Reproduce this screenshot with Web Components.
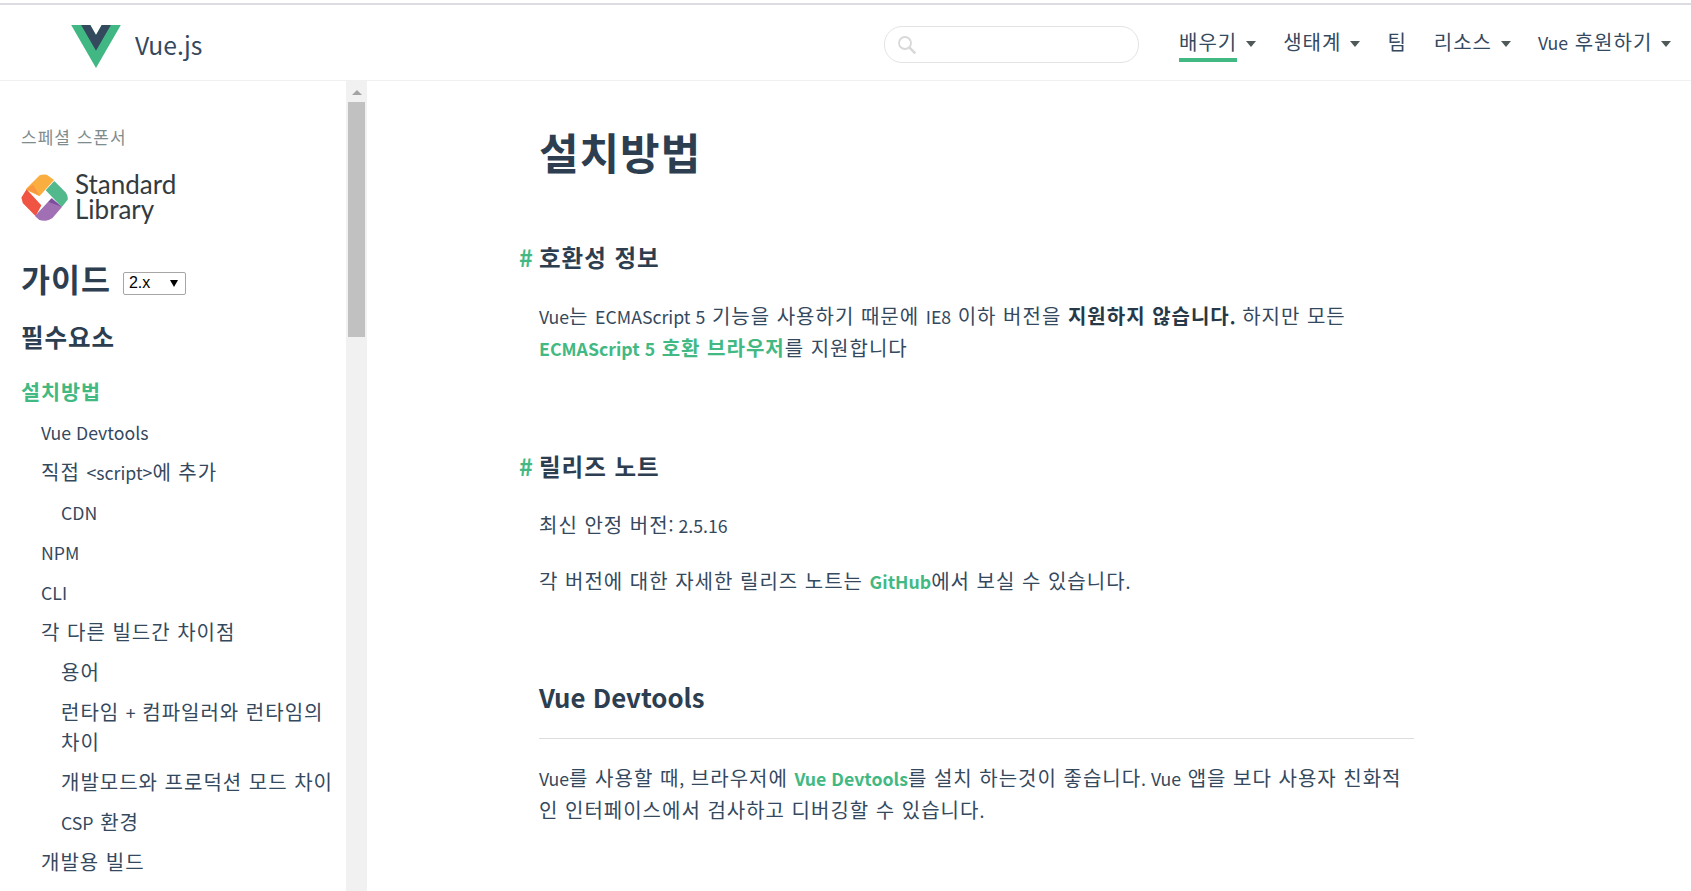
<!DOCTYPE html>
<html lang="ko">
<head>
<meta charset="utf-8">
<title>설치방법 - Vue.js</title>
<style>
  html, body { margin: 0; height: 100%; overflow: hidden; background: #fff; }
  body { font-family: "Noto Sans CJK KR", "Noto Sans", sans-serif; color: #34495e; font-size: 20px; letter-spacing: .05em; }
  .l { font-size: .885em; letter-spacing: 0; }
</style>
</head>
<body>
<docs-page>
  <top-bar slot="top">
    <nav-item active menu>배우기</nav-item>
    <nav-item menu>생태계</nav-item>
    <nav-item>팀</nav-item>
    <nav-item menu>리소스</nav-item>
    <nav-item menu><span class="l">Vue</span> 후원하기</nav-item>
  </top-bar>
  <side-bar slot="side"></side-bar>
  <doc-content slot="main"></doc-content>
</docs-page>

<script>
// latin runs sit smaller than the hangul around them
function latin(text) {
  const esc = (s) => s.replace(/&/g, '&amp;').replace(/</g, '&lt;').replace(/>/g, '&gt;');
  return text.split(/([A-Za-z0-9.,:<>+#][A-Za-z0-9.,:<>+# ]*[A-Za-z0-9.,:<>+#]|[A-Za-z0-9.,:<>+#])/)
    .map((part, i) => (i % 2 ? `<span class="l">${esc(part)}</span>` : esc(part)))
    .join('')
    .replace(/\n/g, '<br>');
}

class DocsPage extends HTMLElement {
  constructor() {
    super();
    this.attachShadow({ mode: 'open' }).innerHTML = `
      <style>
        :host { display: grid; grid-template-rows: 81px 1fr; grid-template-columns: 367px 1fr; height: 891px; overflow: hidden; }
        .top { grid-column: 1 / 3; padding-top: 3px; box-sizing: border-box; }
      </style>
      <div class="top"><slot name="top"></slot></div>
      <slot name="side"></slot>
      <slot name="main"></slot>`;
  }
}

class TopBar extends HTMLElement {
  constructor() {
    super();
    this.attachShadow({ mode: 'open' }).innerHTML = `
      <style>
        :host { display: flex; align-items: flex-start; height: 78px; box-sizing: border-box; border-top: 2px solid #dcdce2; border-bottom: 1px solid #f0f0f0; padding-left: 71px; background: #fff; overflow: hidden; }
        .mark { display: block; flex: none; width: 50px; height: 43px; margin-top: 20px; }
        .name { flex: none; width: 67px; font-size: 24.7px; line-height: 40px; margin: 19px 0 0 14px; color: #34495e; letter-spacing: 0; }
        .search { flex: none; margin: 21px 0 0 682px; width: 255px; height: 37px; box-sizing: border-box; border: 1px solid #e3e3e3; border-radius: 18px; display: flex; align-items: center; padding-left: 12px; }
        .search svg { width: 20px; height: 20px; }
        nav { display: flex; flex: none; margin-left: 40px; }
      </style>
      <svg class="mark" viewBox="0 0 261.76 226.69" aria-label="Vue logo">
        <path d="M161.096.001l-30.225 52.351L100.647.001H-.005l130.877 226.688L261.749.001z" fill="#41b883"/>
        <path d="M161.096.001l-30.225 52.351L100.647.001H52.346l78.526 136.01L209.398.001z" fill="#34495e"/>
      </svg>
      <div class="name">Vue.js</div>
      <div class="search">
        <svg viewBox="0 0 20 20" fill="none" stroke="#d8d8d8"><circle cx="8" cy="8" r="6" stroke-width="1.8"/><path d="M12.3 12.3l6 6" stroke-width="2.6"/></svg>
      </div>
      <nav><slot></slot></nav>`;
  }
}

class NavItem extends HTMLElement {
  connectedCallback() {
    if (this.shadowRoot) return;
    const active = this.hasAttribute('active');
    const menu = this.hasAttribute('menu');
    this.attachShadow({ mode: 'open' }).innerHTML = `
      <style>
        :host { display: flex; flex: none; align-items: flex-start; margin-right: 27px; font-size: 20px; color: #34495e; }
        :host(:last-child) { margin-right: 0; }
        .t { display: block; height: 30px; margin-top: 23px; line-height: 28px; white-space: nowrap; border-bottom: ${active ? '4px solid #42b983' : '0'}; }
        i { width: 0; height: 0; margin: 36px 0 0 9px; border: 5px solid transparent; border-top: 6px solid #4f5959; border-bottom: 0; }
      </style>
      <span class="t"><slot></slot></span>${menu ? '<i></i>' : ''}`;
  }
}

const LINKS = [
  ['Vue Devtools', 1],
  ['직접 <script>에 추가', 1],
  ['CDN', 2],
  ['NPM', 1],
  ['CLI', 1],
  ['각 다른 빌드간 차이점', 1],
  ['용어', 2],
  ['런타임 + 컴파일러와 런타임의\n차이', 2],
  ['개발모드와 프로덕션 모드 차이', 2],
  ['CSP 환경', 2],
  ['개발용 빌드', 1],
];

class SideBar extends HTMLElement {
  constructor() {
    super();
    this.attachShadow({ mode: 'open' }).innerHTML = `
      <style>
        :host { display: flex; height: 810px; overflow: hidden; background: #fff; }
        .in { width: 346px; box-sizing: border-box; padding: 41px 8px 0 21px; flex: none; }
        .l { font-size: .885em; letter-spacing: 0; }
        .sp { font-size: 17px; line-height: 30px; color: #7f8c8d; }
        .logo { display: flex; align-items: center; gap: 7px; margin-top: 20px; height: 50px; }
        .logo svg { flex: none; }
        .logo b { font: 400 26px/25px Lato, sans-serif; letter-spacing: 0; color: #333a40; }
        .g { display: flex; align-items: center; margin-top: 36px; height: 40px; }
        h2 { margin: 0; font-size: 31.5px; line-height: 40px; color: #2c3e50; font-weight: 700; }
        .ver { margin-left: 12px; margin-top: 10px; width: 63px; height: 23px; box-sizing: border-box; border: 1px solid #a6a6a6; border-radius: 2px; display: flex; align-items: center; justify-content: space-between; padding: 0 7px 0 5px; font: 16px "Liberation Sans", sans-serif; letter-spacing: 0; color: #000; }
        .ver i { border: 4px solid transparent; border-top: 7px solid #000; border-bottom: 0; }
        h3 { margin: 24px 0 0; font-size: 24.5px; line-height: 30px; color: #2c3e50; font-weight: 700; }
        .act { margin-top: 24px; font-size: 20.7px; line-height: 30px; font-weight: 700; color: #42b983; }
        #links { display: flex; flex-direction: column; gap: 10px; padding-top: 11px; }
        .sb { width: 21px; flex: none; background: #f1f1f1; display: flex; flex-direction: column; align-items: center; }
        .sb .up { margin-top: 9px; border: 5px solid transparent; border-bottom: 5px solid #a3a3a3; border-top: 0; }
        .sb .th { margin-top: 7px; width: 17px; height: 235px; background: #c1c1c1; }
      </style>
      <div class="in">
        <div class="sp">스페셜 스폰서</div>
        <div class="logo">
          <svg width="47" height="47" viewBox="0 0 47 47" stroke-linejoin="round" stroke-width="1.5">
            <path d="M5.7 15.3 L19 2 Q22 .6 25.7 1.5 L32 6 L18.3 21.3 Z" fill="#fbae40" stroke="#fbae40"/>
            <path d="M5.7 15.3 L18.3 21.3 L12 10.5 Z" fill="#f9963f"/>
            <path d="M1.2 23.7 L5.7 16.5 L19.5 31.5 L14.5 41 L2.5 28.7 Z" fill="#f05442" stroke="#f05442"/>
            <path d="M25.7 16.3 L33.3 8 L44 18.7 Q46.5 22 46 25.3 L40.7 32 Z" fill="#52b98d" stroke="#52b98d"/>
            <path d="M15 42 L30.7 25 L40 33 L30.7 43.7 Q27 46.3 24 46 Q20 46 18.3 45 Z" fill="#a170b4" stroke="#a170b4"/>
            <path d="M30.7 24.5 L40.5 32.8 L27.5 28 Z" fill="#7d4e9e"/>
          </svg>
          <b>Standard<br>Library</b>
        </div>
        <div class="g"><h2>가이드</h2><div class="ver">2.x<i></i></div></div>
        <h3>필수요소</h3>
        <div class="act">설치방법</div>
        <div id="links"></div>
      </div>
      <div class="sb"><div class="up"></div><div class="th"></div></div>`;
    const box = this.shadowRoot.getElementById('links');
    LINKS.forEach(([text, level]) => {
      const item = document.createElement('side-link');
      item.innerHTML = latin(text);
      item.setAttribute('level', level);
      box.appendChild(item);
    });
  }
}

class SideLink extends HTMLElement {
  constructor() {
    super();
    this.attachShadow({ mode: 'open' }).innerHTML = `
      <style>
        :host { display: block; font-size: 20px; line-height: 30px; color: #34495e; }
        :host([level="1"]) { padding-left: 20px; }
        :host([level="2"]) { padding-left: 40px; }
      </style><slot></slot>`;
  }
}

class DocContent extends HTMLElement {
  constructor() {
    super();
    const p1 = latin('Vue는 ECMAScript 5 기능을 사용하기 때문에 IE8 이하 버전을 ');
    const p3 = latin('를 설치 하는것이 좋습니다. Vue 앱을 보다 사용자 친화적\n인 인터페이스에서 검사하고 디버깅할 수 있습니다.');
    this.attachShadow({ mode: 'open' }).innerHTML = `
      <style>
        :host { display: block; padding: 34px 0 0 172px; height: 810px; box-sizing: border-box; overflow: hidden; background: #fff; }
        article { width: 875px; font-size: 20px; line-height: 32px; color: #34495e; }
        .l { font-size: .885em; letter-spacing: 0; }
        h1 { margin: 0; font-size: 43px; line-height: 72px; font-weight: 700; color: #2c3e50; }
        h2 { margin: 0; font-size: 23.5px; line-height: 40px; font-weight: 700; color: #2c3e50; position: relative; }
        h2::before { content: "#"; position: absolute; left: -20px; color: #42b983; font-weight: 700; letter-spacing: 0; }
        h3 { margin: 0; font-size: 25.8px; line-height: 44px; font-weight: 700; color: #2c3e50; letter-spacing: 0; }
        p { margin: 0; }
        a { color: #42b983; font-weight: 700; text-decoration: none; }
        strong { font-weight: 700; color: #273849; }
        hr { border: 0; border-top: 1px solid #ddd; margin: 19px 0 23px; }
      </style>
      <article>
        <h1>설치방법</h1>
        <h2 style="margin-top:50px">호환성 정보</h2>
        <p style="margin-top:23px">${p1}<strong>지원하지 않습니다<span class="l">.</span></strong> 하지만 모든<br><a href="#">${latin('ECMAScript 5 호환 브라우저')}</a>를 지원합니다</p>
        <h2 style="margin-top:82px">릴리즈 노트</h2>
        <p style="margin-top:23px">${latin('최신 안정 버전: 2.5.16')}</p>
        <p style="margin-top:24px">각 버전에 대한 자세한 릴리즈 노트는 <a href="#"><span class="l">GitHub</span></a>에서 보실 수 있습니다<span class="l">.</span></p>
        <h3 style="margin-top:78px">Vue Devtools</h3>
        <hr>
        <p>${latin('Vue를 사용할 때, 브라우저에 ')}<a href="#"><span class="l">Vue Devtools</span></a>${p3}</p>
      </article>`;
  }
}

customElements.define('docs-page', DocsPage);
customElements.define('top-bar', TopBar);
customElements.define('nav-item', NavItem);
customElements.define('side-link', SideLink);
customElements.define('side-bar', SideBar);
customElements.define('doc-content', DocContent);
</script>
</body>
</html>
